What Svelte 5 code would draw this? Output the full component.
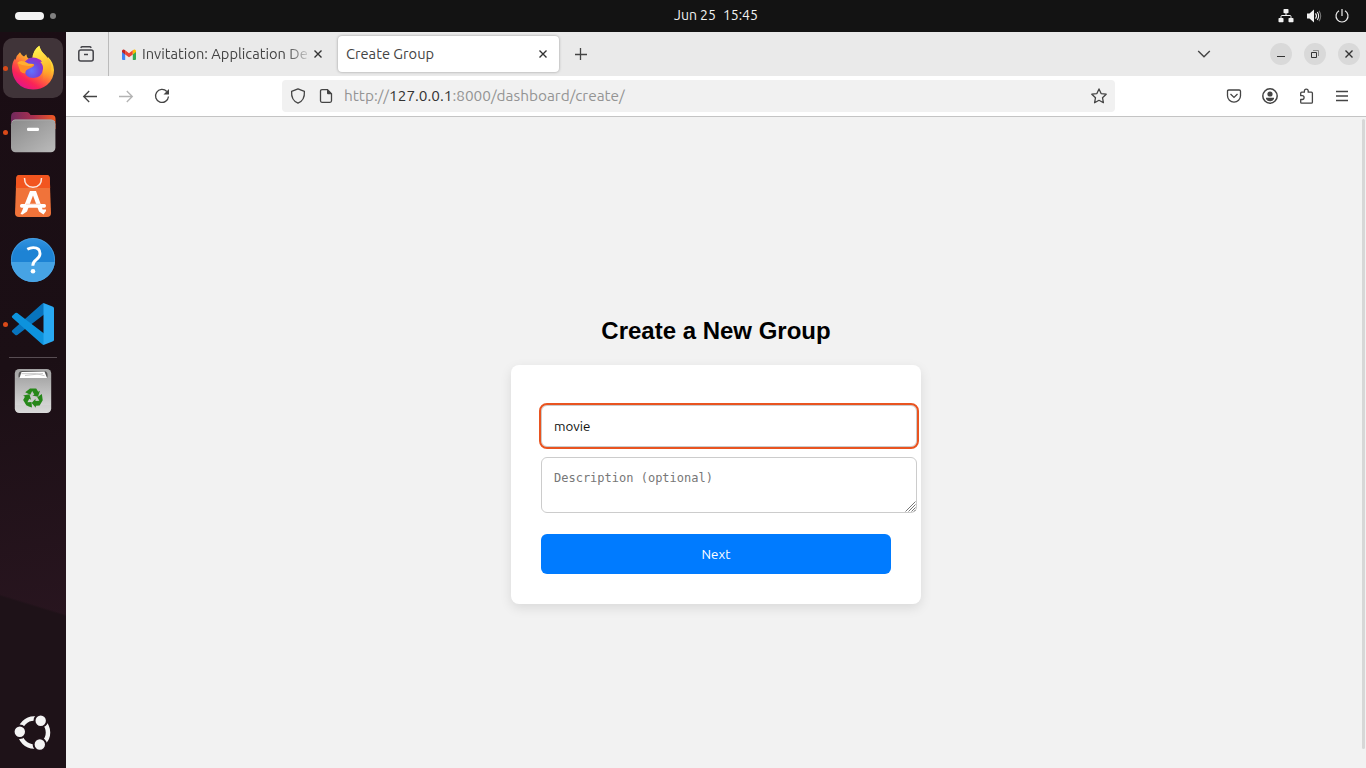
<script>
  let name = $state('movie');
  let description = $state('');
</script>

<div class="desktop">
  <header class="topbar">
    <div class="workspaces"><span class="pill"></span><span class="dot"></span></div>
    <div class="clock"><span>Jun 25</span><span>15:45</span></div>
    <div class="status">
      <svg width="16" height="16" viewBox="0 0 16 16" fill="#f2f2f2">
        <rect x="5.5" y="1" width="5" height="4.2" rx=".8" /><rect x=".5" y="10" width="5" height="4.2" rx=".8" /><rect x="10.5" y="10" width="5" height="4.2" rx=".8" />
        <path d="M8 5v3M3 10.500V8.500q0-1 1-1h8q1 0 1 1v2" fill="none" stroke="#f2f2f2" />
      </svg>
      <svg width="16" height="16" viewBox="0 0 16 16">
        <path d="M1 5.500h2.500L8 1.600v12.800L3.500 10.500H1z" fill="#f2f2f2" />
        <path d="M9.500 5.300q2 2.700 0 5.400M11.300 4q2.700 4 0 8" fill="none" stroke="#f2f2f2" stroke-width="1.100" />
        <path d="M13 2.900q3.400 5.100 0 10.200" fill="none" stroke="#777" stroke-width="1.100" />
      </svg>
      <svg width="16" height="16" viewBox="0 0 16 16" fill="none" stroke="#eee" stroke-width="1.200">
        <path d="M8 1v7M5 2.800a6 6 0 1 0 6 0" />
      </svg>
    </div>
  </header>

  <aside class="dock">
    <div class="app running active">
      <svg width="60" height="60" viewBox="0 0 60 60">
        <defs>
          <linearGradient id="fx" x1=".8" y1=".1" x2=".25" y2=".95"><stop offset="0" stop-color="#fff14a" /><stop offset=".3" stop-color="#ffc42c" /><stop offset=".55" stop-color="#ff7139" /><stop offset=".8" stop-color="#fa2457" /><stop offset="1" stop-color="#e31587" /></linearGradient>
          <linearGradient id="fy" x1=".5" y1="0" x2=".7" y2="1"><stop offset="0" stop-color="#fff44f" /><stop offset=".6" stop-color="#ffbd2f" /><stop offset="1" stop-color="#ff8a16" stop-opacity="0" /></linearGradient>
          <radialGradient id="fp" cx=".4" cy=".65" r=".7"><stop offset="0" stop-color="#6173ff" /><stop offset=".6" stop-color="#7046dc" /><stop offset="1" stop-color="#a328c4" /></radialGradient>
        </defs>
        <path d="M17 14.300q1.500 3 4 4.200l2.300-2.200q.3 2.500 2 4.200h4.200q0-8 6.800-12.800 1 5 6 9.500 1.500 1.500 2.500 4v-2.500q6 6 6.200 13.300Q51 41 44 47q-6 4.500-14 4.500-10 0-16-7Q9 38 9 30.500q0-6 3-10l.5 1.500q1-5 4.500-7.700z" fill="url(#fx)" />
        <path d="M29.500 20.500Q30 12 36.300 7.700q1 5 6 9.500 8 7 5.500 16.800-2 7-8.800 9 3-7 0-13-3.500-7-9.500-9.500z" fill="url(#fy)" />
        <path d="M21 26q2-6 9-6.500 4 0 5.500 1.500 2.500.7 3.500 3l-1.800-.3Q40.500 27 40 31q-1 8.500-9.500 9-8.500 0-9.500-8.500z" fill="url(#fp)" />
        <path d="M14.300 25q2.700-3.200 7-1.500l4.200 2.200 5 .3q1 .3.600 1.400-1 1.700-4.700 3-4.500 1.500-4 5.200-3 0-5-2z" fill="#ff8d28" />
        <path d="M14.300 25q2.700-3.200 7-1.500l4.200 2.200 5 .3-2 1.800q-7 1.200-14.200-2.800z" fill="#ffae32" />
      </svg>
    </div>
    <div class="app running">
      <svg width="60" height="60" viewBox="0 0 60 60">
        <defs>
          <linearGradient id="fb"><stop offset="0" stop-color="#70295d" /><stop offset=".5" stop-color="#a9304f" /><stop offset="1" stop-color="#f05a23" /></linearGradient>
          <linearGradient id="fg" x1="0" y1="0" x2="1" y2="1"><stop offset="0" stop-color="#8a8a8a" /><stop offset="1" stop-color="#bbb" /></linearGradient>
        </defs>
        <path d="M8 15q0-5 4.500-5H24q1.500 0 2.500 1.500l1 1.500H49q3.500 0 3.500 4v10H8z" fill="url(#fb)" />
        <rect x="8" y="17.700" width="44.400" height="32.500" rx="4.500" fill="url(#fg)" />
        <path d="M9 20q1-2 3-2h36q3 0 4 2" fill="none" stroke="#aaa" />
        <rect x="24" y="25.700" width="12" height="3.300" rx="1.200" fill="#fff" />
      </svg>
    </div>
    <div class="app">
      <svg width="60" height="60" viewBox="0 0 60 60">
        <path d="M16.500 9h27q3 0 3.200 3L48 47q0 4-4 4H16q-4 0-4-4l1.300-35q.2-3 3.200-3z" fill="#f0733a" />
        <path d="M16.500 9h27q3 0 3.200 3L47.200 22H12.800l.5-10q.2-3 3.200-3z" fill="#f2551f" />
        <path d="M21.500 12q0 9.200 8.500 9.200t8.500-9.200" fill="none" stroke="#fbe8df" stroke-width="1.500" />
        <path d="M27 25h6l6.600 18.500H43v1.500L40.500 48.500 36 45.500 30 29.500 24 45.500 19.500 48.500 17.500 48l1.500-3z" fill="#fff" />
        <rect x="17" y="38" width="26" height="3.800" rx="1.700" fill="#fff" />
        <path d="M23 38.200h14" stroke="#ffd7c8" />
      </svg>
    </div>
    <div class="app">
      <svg width="60" height="60" viewBox="0 0 60 60">
        <defs><linearGradient id="hp" x1="0" y1="0" x2="0" y2="1"><stop offset="0" stop-color="#3393df" /><stop offset=".3" stop-color="#1d83d4" /></linearGradient></defs>
        <circle cx="30" cy="30" r="22" fill="url(#hp)" />
        <path d="M8.100 32h43.800a22 22 0 0 1-43.800 0z" fill="#46a3e4" />
        <circle cx="30" cy="30" r="21.600" fill="none" stroke="#54a9e6" stroke-opacity=".6" />
        <path d="M24.300 19.300q3-1.700 6-1.700 6.700 0 6.700 6 0 3.200-3.700 6.100-3.500 2.700-3.500 6" fill="none" stroke="#fff" stroke-width="2.900" />
        <circle cx="30" cy="41.300" r="2.300" fill="#fff" />
      </svg>
    </div>
    <div class="app running">
      <svg width="60" height="60" viewBox="0 0 60 60">
        <path d="M9.300 36.300q-1 1 0 2l3 2.700q1 .7 2 0L41 20.500V9q-1.500.2-3 1.800z" fill="#0874bd" />
        <path d="M9.300 23.700q-1-1 0-2l3-2.700q1-.7 2 0L41 39.500V51q-1.500-.2-3-1.800z" fill="#0d93dd" />
        <path d="M40.500 9l9.500 3.800q1 .5 1 1.500v31.400q0 1-1 1.500L40.500 51z" fill="#29a9f2" />
      </svg>
    </div>
    <div class="separator"></div>
    <div class="app">
      <svg width="60" height="60" viewBox="0 0 60 60">
        <defs><linearGradient id="tr" x1="0" y1="0" x2="0" y2="1"><stop offset="0" stop-color="#a3a3a3" /><stop offset="1" stop-color="#d9d9d9" /></linearGradient></defs>
        <rect x="11.800" y="8" width="36.400" height="44" rx="4.500" fill="url(#tr)" />
        <path d="M15.500 16.500v-2.500q0-4 4-4h21q4 0 4 4v2.500z" fill="#555" />
        <path d="M18.500 11l23-.5 2.500 6.500H16.500z" fill="#fff" />
        <path d="M18.500 12.700h15l8 2M22 14.500l18-2" stroke="#c7c7c7" fill="none" />
        <path d="M12 17h36v27H12z" fill="url(#tr)" opacity=".5" />
        <g fill="#268719">
          <path d="M24.800 29.200l2.200-1.700h6.200l2 3.200 1.800-1-2 6-5.600-1.200 1.900-1.100-2.100-3.300-2 3.600-5-2.400z" />
          <path transform="rotate(120 30 37)" d="M24.800 29.200l2.200-1.700h6.200l2 3.200 1.800-1-2 6-5.600-1.200 1.900-1.100-2.100-3.300-2 3.600-5-2.400z" />
          <path transform="rotate(240 30 37)" d="M24.800 29.200l2.200-1.700h6.200l2 3.200 1.800-1-2 6-5.600-1.200 1.900-1.100-2.100-3.300-2 3.600-5-2.400z" />
        </g>
      </svg>
    </div>
    <div class="app launcher">
      <svg width="60" height="60" viewBox="0 0 60 60">
        <circle cx="31" cy="29.500" r="14" fill="none" stroke="#f4f4f4" stroke-width="4.500" />
        <g fill="#f4f4f4" stroke="#20131a" stroke-width="2">
          <circle cx="16.800" cy="28.800" r="6.200" /><circle cx="37.700" cy="17.700" r="6.200" /><circle cx="36.800" cy="41.500" r="6.200" />
        </g>
      </svg>
    </div>
  </aside>

  <main class="browser">
    <div class="tabs">
      <div class="view">
        <svg width="16" height="16" viewBox="0 0 16 16" fill="none" stroke="#444449" stroke-width="1.500"><path d="M2.800 1.800q.5-1 1.500-1h7.400q1 0 1.500 1" /><rect x=".8" y="4" width="14.400" height="11" rx="2" /><path d="M6 8.500h4" /></svg>
      </div>
      <div class="tab">
        <svg class="gmail" width="14" height="11" viewBox="0 0 14 11">
          <path d="M0 2v8q0 1 1 1h2.200V4z" fill="#4285f4" /><path d="M14 2v8q0 1-1 1h-2.200V4z" fill="#34a853" />
          <path d="M3.200 1.200L7 4.200l3.800-3V5.400L7 8.300 3.200 5.400z" fill="#ea4335" /><path d="M0 2q0-1.800 1.800-1.600l1.400.8v4.200L0 3z" fill="#c5221f" /><path d="M14 2q0-1.800-1.800-1.600l-1.400.8v4.200L14 3z" fill="#fbbc04" />
        </svg>
        <span class="label faded">Invitation: Application Dep</span>
        <svg class="close" width="10" height="10" viewBox="0 0 10 10"><path d="M1.500 1.500l7 7m0-7l-7 7" /></svg>
      </div>
      <div class="tab selected">
        <span class="label">Create Group</span>
        <svg class="close" width="10" height="10" viewBox="0 0 10 10"><path d="M1.500 1.500l7 7m0-7l-7 7" /></svg>
      </div>
      <svg class="plus" width="12" height="12" viewBox="0 0 12 12" stroke="#444" stroke-width="1.300"><path d="M5.500 0v12M0 6.500h12" /></svg>
      <div class="window-tools">
        <svg width="14" height="14" viewBox="0 0 14 14" fill="none" stroke="#444" stroke-width="1.400"><path d="M1.200 4L7 9.800 12.800 4" /></svg>
        <span class="round"><svg width="10" height="10" viewBox="0 0 10 10"><path d="M1 7.500h8" stroke="#333" /></svg></span>
        <span class="round"><svg width="10" height="10" viewBox="0 0 10 10" fill="none"><path d="M1.500 3.500h5v5h-5z" stroke="#333" /><path d="M3 1.500h5.500V7" stroke="#888" /></svg></span>
        <span class="round"><svg width="10" height="10" viewBox="0 0 10 10"><path d="M1.500 1.500l7 7m0-7l-7 7" stroke="#333" stroke-width="1.400" /></svg></span>
      </div>
    </div>

    <div class="navbar">
      <div class="history">
        <svg width="16" height="16" viewBox="0 0 16 16"><path d="M15 8.500H1.800M7.200 3L1.700 8.500 7.200 14" /></svg>
        <svg class="disabled" width="16" height="16" viewBox="0 0 16 16"><path d="M1 8.500h13.200M8.800 3l5.500 5.500L8.800 14" /></svg>
        <svg width="16" height="16" viewBox="0 0 16 16"><path d="M12.800 3.500A6.500 6.500 0 1 0 14.500 8.500" /><path d="M15 1v5.500H9.500z" fill="#444" stroke="none" /></svg>
      </div>
      <div class="urlbar">
        <svg width="16" height="16" viewBox="0 0 16 16"><path d="M8 .9l6.400 2.500Q15 12.300 8 15.200 1 12.300 1.600 3.400z" stroke-linejoin="round" /></svg>
        <svg width="16" height="16" viewBox="0 0 16 16"><path d="M9.500 1.700H4q-1.500 0-1.500 1.500v9.600q0 1.500 1.500 1.500h8q1.500 0 1.500-1.500V5.700z" /><path d="M9 1.200L14 6.200H10q-1 0-1-1z" fill="#444" stroke="none" /></svg>
        <span class="url">http://<b>127.0.0.1</b>:8000/dashboard/create/</span>
        <svg class="star" width="16" height="16" viewBox="0 0 16 16"><path d="M8 .9l2.100 4.700 5.100.6-3.700 3.500.9 5L8 12.300l-4.400 2.400.9-5L.8 6.200l5.100-.6z" stroke-linejoin="round" /></svg>
      </div>
      <div class="tools">
        <svg width="16" height="16" viewBox="0 0 16 16"><path d="M2.800 2h10.400q1.300 0 1.300 1.300v4.400a6.500 6.500 0 0 1-13 0V3.300Q1.500 2 2.800 2z" /><path d="M4.500 6L8 9.400 11.500 6" /></svg>
        <svg width="16" height="16" viewBox="0 0 16 16"><circle cx="8" cy="8" r="7.200" stroke-width="1.500" /><g fill="#444" stroke="none"><circle cx="8" cy="6" r="2.600" /><path d="M4 9.800h8V11q-1.300 2.300-4 2.300T4 11z" /></g></svg>
        <svg width="16" height="16" viewBox="0 0 16 16"><path d="M2.700 5.200q0-1 1-1h2.700V3a1.900 1.900 0 0 1 3.800 0v1.200h3.200q1 0 1 1v9q0 1-1 1H3.700q-1 0-1-1v-2.700h1.500a1.900 1.900 0 0 0 0-3.800H2.700z" stroke-linejoin="round" /></svg>
        <svg width="16" height="16" viewBox="0 0 16 16"><path d="M2 3.500h12M2 8h12M2 12.500h12" /></svg>
      </div>
    </div>

    <section class="page">
      <h2>Create a New Group</h2>
      <form onsubmit={(e) => e.preventDefault()}>
        <input type="text" bind:value={name} />
        <div class="area">
          <textarea placeholder="Description (optional)" bind:value={description}></textarea>
          <svg class="grip" width="11" height="11" viewBox="0 0 11 11"><path d="M.5 10.500l10-10M3.500 10.500l7-7M6.500 10.500l4-4M9 10.500L10.500 9" stroke="#777" /></svg>
        </div>
        <button type="submit">Next</button>
      </form>
      <div class="scrollbar"></div>
    </section>
  </main>
</div>

<style>
  :global(body) { margin: 0; overflow: hidden; }
  * { box-sizing: border-box; }
  svg { display: block; flex: none; }
  .desktop { width: 1366px; height: 768px; display: grid; grid-template: 32px 736px / 66px 1300px; font-family: Ubuntu, "Noto Sans", sans-serif; }
  .topbar { grid-column: 1 / 3; background: #131313; display: grid; grid-template-columns: 674px 90px 1fr; align-items: center; color: #f2f2f2; }
  .workspaces { display: flex; align-items: center; gap: 6px; padding-left: 15px; }
  .pill { width: 29px; height: 8px; border-radius: 4px; background: #f4f4f4; }
  .dot { width: 6px; height: 6px; border-radius: 50%; background: #808080; }
  .clock { display: flex; gap: 7px; font-size: 14px; line-height: 30px; height: 32px; white-space: nowrap; }
  .status { display: flex; justify-content: flex-end; gap: 12px; padding-right: 16px; }

  .dock { background: linear-gradient(197deg, transparent 77%, #1e1218 77.300%), linear-gradient(170deg, #1a0d14 0%, #1b0f15 45%, #28151f 80%); display: flex; flex-direction: column; align-items: center; gap: 4px; padding-top: 6px; }
  .app { width: 60px; height: 60px; border-radius: 10px; position: relative; flex: none; }
  .active { background: #403439; }
  .running::before { content: ""; position: absolute; left: 0; top: 27.500px; width: 5px; height: 5px; border-radius: 50%; background: #d94a19; }
  .separator { width: 48px; height: 1px; margin: -1px 0; background: #584d53; }
  .launcher { margin-top: auto; margin-bottom: 5px; }

  .browser { display: grid; grid-template-rows: 44px 41px 651px; background: #fff; min-width: 0; }
  .tabs { background: #eaeaea; display: flex; align-items: center; }
  .view { width: 43px; height: 44px; border-right: 1px solid #bbb; padding: 14px 12px; }
  .tab { width: 221px; height: 36px; display: flex; align-items: center; padding: 0 11px 0 13px; margin-right: 8px; border-radius: 4px; }
  .tab.selected { background: #fff; box-shadow: 0 0 3px rgba(0,0,0,.35); padding-left: 8px; margin-right: 16px; }
  .gmail { margin-right: 6px; }
  .label { font-size: 14.670px; line-height: 22px; color: #444; white-space: nowrap; flex: 1; overflow: hidden; }
  .faded { flex: 0 0 167px; margin-right: 4px; mask-image: linear-gradient(to right, #000 145px, transparent 170px); }
  .close { stroke: #333; stroke-width: 1.400; }
  .window-tools { margin-left: auto; display: flex; align-items: center; gap: 12px; padding-right: 6px; }
  .window-tools > svg { margin-right: 47px; }
  .round { width: 22px; height: 22px; border-radius: 50%; background: #d9d9d9; display: grid; place-items: center; }
  .navbar { display: flex; align-items: center; border-bottom: 1px solid #c4c4c4; }
  .navbar svg { fill: none; stroke: #444; stroke-width: 1.300; }
  .history { width: 216px; display: flex; gap: 20px; padding-left: 16px; }
  .history .disabled { opacity: .4; }
  .urlbar { width: 833px; height: 32px; background: #f1f1f1; border-radius: 4px; display: flex; align-items: center; gap: 12px; padding: 0 8px; }
  .url { flex: 1; margin-left: -2px; color: #949494; font-size: 15.400px; line-height: 32px; white-space: nowrap; }
  .url b { color: #333; font-weight: 400; }
  .tools { margin-left: auto; display: flex; gap: 20px; padding-right: 16px; }

  .page { position: relative; background: #f2f2f2; display: flex; flex-direction: column; align-items: center; padding-top: 200px; }
  h2 { margin: 0 0 20px; font: bold 24px/28px "Liberation Sans", Arial, sans-serif; color: #000; }
  form { width: 410px; height: 239px; padding: 40px 30px 30px; border-radius: 8px; background: #fff; box-shadow: 0 4px 12px rgba(0,0,0,.1); }
  input { display: block; width: 376px; height: 42px; margin: 0 0 10px; padding: 12px; border: 1px solid #ccc; border-radius: 6px; outline: 2px solid #e95420; outline-offset: 0; font: 13.330px Ubuntu, "Noto Sans", sans-serif; color: #111; }
  .area { width: 376px; position: relative; }
  textarea { display: block; width: 376px; height: 56px; padding: 13px 12px 12px; border: 1px solid #ccc; border-radius: 6px; resize: none; outline: none; overflow: hidden; font: 12px/14px "DejaVu Sans Mono", monospace; }
  textarea::placeholder { color: #777; }
  .grip { position: absolute; right: 1px; bottom: 1px; }
  button { display: block; width: 350px; height: 40px; margin-top: 21px; padding: 0; border: 0; border-radius: 6px; background: #007bff; color: #fff; font: 13.330px Ubuntu, "Noto Sans", sans-serif; }
  .scrollbar { position: absolute; left: 1296px; top: 2px; width: 3px; height: 630px; border-radius: 2px; background: #d7d7d7; }
</style>
